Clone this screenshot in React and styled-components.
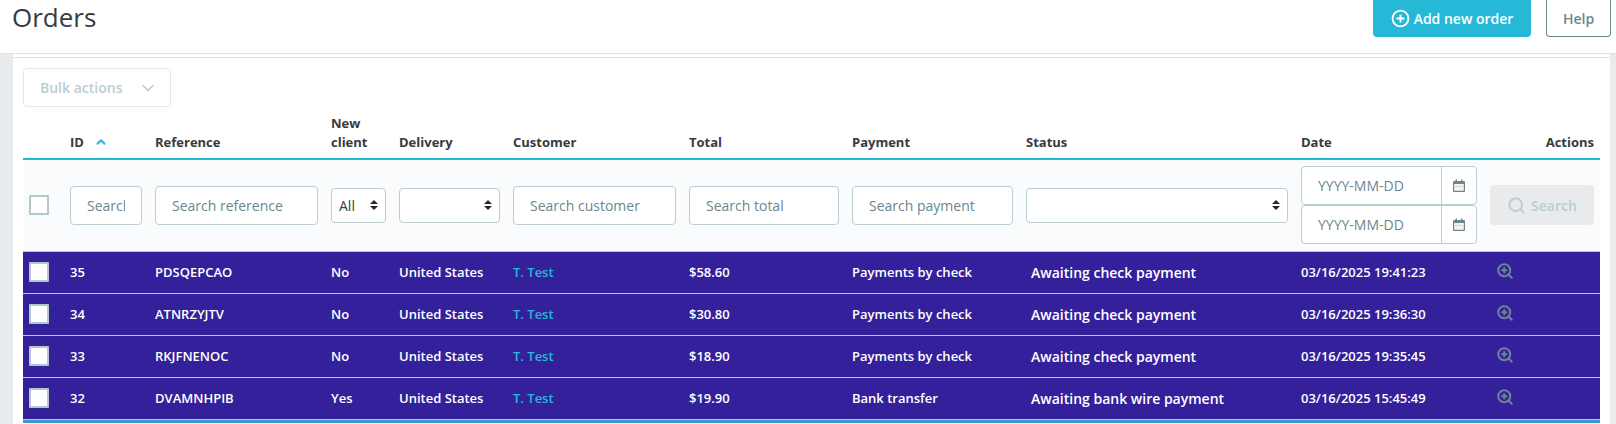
import React from 'react';
import styled, { createGlobalStyle } from 'styled-components';
import { ZoomIn, Search, CirclePlus, ChevronDown, ChevronUp } from 'lucide-react';

const GlobalStyle = createGlobalStyle`
  html, body {
    margin: 0;
    padding: 0;
    height: 424px;
    overflow: hidden;
    background: #eaebec;
    font-family: "Open Sans", "Liberation Sans", sans-serif;
    color: #363a41;
  }
`;

const PageHeader = styled.header`
  display: flex;
  justify-content: space-between;
  height: 53px;
  padding: 0 5px 0 12px;
  background: #fff;
  border-bottom: 1px solid #dfe3e6;
`;

const Title = styled.h1`
  margin: 0;
  font-size: 26px;
  font-weight: 400;
  line-height: 35px;
`;

const HeaderButtons = styled.div`
  display: flex;
  gap: 15px;
  height: 37px;
`;

const PrimaryButton = styled.button`
  display: flex;
  align-items: center;
  justify-content: center;
  gap: 4px;
  width: 158px;
  padding: 0;
  border: 0;
  border-radius: 0 0 4px 4px;
  background: #25b9d7;
  color: #fff;
  font: 600 14px "Open Sans", sans-serif;
`;

const HelpButton = styled.button`
  width: 65px;
  padding: 0;
  border: 1px solid #6c868e;
  border-top: 0;
  border-radius: 0 0 4px 4px;
  background: #fff;
  color: #6c868e;
  font: 600 14px "Open Sans", sans-serif;
`;

const Card = styled.main`
  box-sizing: border-box;
  height: 370px;
  margin: 0 6px 0 12px;
  padding-top: 3px;
  overflow: hidden;
  background: #fff;
  border-left: 1px solid #e3ecee;
`;

const CardBody = styled.div`
  padding: 10px 0 0 10px;
  border-top: 1px solid #dfe3e6;
`;

const BulkButton = styled.div`
  display: flex;
  align-items: center;
  justify-content: space-between;
  box-sizing: border-box;
  width: 148px;
  height: 39px;
  padding: 0 12px 0 16px;
  border: 1px solid #e4e8ea;
  border-radius: 4px;
  color: #b7ced3;
  font-size: 14px;
  font-weight: 600;
`;

const Table = styled.table`
  width: 1577px;
  margin-top: 2px;
  table-layout: fixed;
  border-collapse: collapse;
`;

const HeadCell = styled.th`
  height: 50px;
  padding: 0 6px 6px 7px;
  box-sizing: border-box;
  border-bottom: 2px solid #25b9d7;
  vertical-align: bottom;
  text-align: ${(p) => (p.$right ? 'right' : 'left')};
  font-size: 13px;
  font-weight: 700;
  line-height: 19px;
  color: #363a41;
`;

const SortMark = styled.span`
  display: inline-flex;
  margin-left: 10px;
  vertical-align: -2px;
  color: #25b9d7;
`;

const FilterRow = styled.tr`
  height: 92px;
  background: #fafbfc;
`;

const FilterCell = styled.td`
  padding: 0 6px 0 7px;
  vertical-align: middle;
`;

const CheckBox = styled.span`
  display: block;
  box-sizing: border-box;
  width: 20px;
  height: 20px;
  margin-left: -1px;
  border: 2px solid #b3c7cd;
  border-radius: 1px;
  background: #fff;
`;

const SearchInput = styled.input`
  display: block;
  box-sizing: border-box;
  width: 100%;
  height: 39px;
  padding: 0 16px;
  border: 1px solid #bbcdd2;
  border-radius: 4px;
  background: #fff;
  font: 400 14px "Open Sans", sans-serif;
  outline: none;
  &::placeholder {
    color: #6c868e;
    opacity: 1;
  }
`;

const SelectBox = styled.div`
  display: flex;
  align-items: center;
  justify-content: space-between;
  box-sizing: border-box;
  width: 100%;
  height: 35px;
  padding: 0 7px;
  border: 1px solid #bbcdd2;
  border-radius: 4px;
  background: #fff;
  color: #363a41;
  font-size: 14px;
`;

const SelectArrows = styled.span`
  display: flex;
  flex-direction: column;
  gap: 2px;
  margin-left: auto;
  &::before, &::after {
    content: '';
    border-left: 4px solid transparent;
    border-right: 4px solid transparent;
  }
  &::before { border-bottom: 4px solid #25282d; }
  &::after { border-top: 4px solid #25282d; }
`;

const DateStack = styled.div`
  display: flex;
  flex-direction: column;
`;

const DateField = styled.div`
  display: flex;
  box-sizing: border-box;
  height: 39px;
  border: 1px solid #bbcdd2;
  border-radius: 4px;
  background: #fff;
`;

const DateText = styled.span`
  flex: 1;
  padding-left: 16px;
  line-height: 37px;
  font-size: 14px;
  color: #6c868e;
`;

const DateIcon = styled.span`
  display: flex;
  align-items: center;
  justify-content: center;
  width: 34px;
  border-left: 1px solid #bbcdd2;
`;

const SearchButton = styled.div`
  display: flex;
  align-items: center;
  justify-content: center;
  gap: 5px;
  height: 40px;
  border-radius: 4px;
  background: #e8eaeb;
  color: #b7ced3;
  font-size: 14px;
  font-weight: 600;
`;

const OrderRow = styled.tr`
  height: 42px;
  background: #35209b;
  border-top: 1px solid #bbc6d4;
`;

const Cell = styled.td`
  padding: 0 6px 0 7px;
  color: #fff;
  font-size: 13px;
  font-weight: 600;
  white-space: nowrap;
`;

const CustomerLink = styled.span`
  color: #25b9d7;
`;

const StatusText = styled.span`
  display: inline-block;
  padding: 1px 0 0 5px;
  font-size: 14px;
`;

const ViewIcon = styled.span`
  display: flex;
  margin: -3px 0 0 6px;
  color: #6c868e;
`;

const NextRowEdge = styled.div`
  box-sizing: border-box;
  width: 1577px;
  height: 4px;
  background: #3a95d5;
  border-top: 1px solid #bbc6d4;
`;

const CalendarGlyph = () => (
  <svg width="12" height="13" viewBox="0 0 12 13" aria-hidden="true">
    <path d="M2.5 0.5h1.5v1.5h4V0.5h1.5v1.5H11a1 1 0 0 1 1 1V12a1 1 0 0 1-1 1H1a1 1 0 0 1-1-1V3a1 1 0 0 1 1-1h1.5z" fill="#6c868e" />
    <rect x="1.2" y="5" width="9.6" height="6.8" fill="#f7f3e8" />
    <path d="M2.5 7.5h7" stroke="#b9c6ca" strokeWidth="1.2" strokeDasharray="1.2 .8" />
  </svg>
);

const orders = [
  { id: 35, ref: 'PDSQEPCAO', fresh: 'No', total: '$58.60', pay: 'Payments by check', status: 'Awaiting check payment', date: '03/16/2025 19:41:23' },
  { id: 34, ref: 'ATNRZYJTV', fresh: 'No', total: '$30.80', pay: 'Payments by check', status: 'Awaiting check payment', date: '03/16/2025 19:36:30' },
  { id: 33, ref: 'RKJFNENOC', fresh: 'No', total: '$18.90', pay: 'Payments by check', status: 'Awaiting check payment', date: '03/16/2025 19:35:45' },
  { id: 32, ref: 'DVAMNHPIB', fresh: 'Yes', total: '$19.90', pay: 'Bank transfer', status: 'Awaiting bank wire payment', date: '03/16/2025 15:45:49' },
];

const widths = [40, 85, 176, 68, 114, 176, 163, 174, 275, 189, 117];

export default function App() {
  return (
    <>
      <GlobalStyle />
      <PageHeader>
        <Title>Orders</Title>
        <HeaderButtons>
          <PrimaryButton><CirclePlus size={19} strokeWidth={2.4} />Add new order</PrimaryButton>
          <HelpButton>Help</HelpButton>
        </HeaderButtons>
      </PageHeader>
      <Card>
        <CardBody>
          <BulkButton>Bulk actions <ChevronDown size={20} /></BulkButton>
          <Table>
            <colgroup>
              {widths.map((w, i) => <col key={i} width={w} />)}
            </colgroup>
            <thead>
              <tr>
                <HeadCell />
                <HeadCell>ID<SortMark><ChevronUp size={14} strokeWidth={3.5} /></SortMark></HeadCell>
                <HeadCell>Reference</HeadCell>
                <HeadCell>New client</HeadCell>
                <HeadCell>Delivery</HeadCell>
                <HeadCell>Customer</HeadCell>
                <HeadCell>Total</HeadCell>
                <HeadCell>Payment</HeadCell>
                <HeadCell>Status</HeadCell>
                <HeadCell>Date</HeadCell>
                <HeadCell $right>Actions</HeadCell>
              </tr>
              <FilterRow>
                <FilterCell><CheckBox /></FilterCell>
                <FilterCell><SearchInput placeholder="Search ID" /></FilterCell>
                <FilterCell><SearchInput placeholder="Search reference" /></FilterCell>
                <FilterCell><SelectBox>All<SelectArrows /></SelectBox></FilterCell>
                <FilterCell><SelectBox><SelectArrows /></SelectBox></FilterCell>
                <FilterCell><SearchInput placeholder="Search customer" /></FilterCell>
                <FilterCell><SearchInput placeholder="Search total" /></FilterCell>
                <FilterCell><SearchInput placeholder="Search payment" /></FilterCell>
                <FilterCell><SelectBox><SelectArrows /></SelectBox></FilterCell>
                <FilterCell>
                  <DateStack>
                    <DateField><DateText>YYYY-MM-DD</DateText><DateIcon><CalendarGlyph /></DateIcon></DateField>
                    <DateField><DateText>YYYY-MM-DD</DateText><DateIcon><CalendarGlyph /></DateIcon></DateField>
                  </DateStack>
                </FilterCell>
                <FilterCell><SearchButton><Search size={19} strokeWidth={2.4} />Search</SearchButton></FilterCell>
              </FilterRow>
            </thead>
            <tbody>
              {orders.map((o) => (
                <OrderRow key={o.id}>
                  <Cell><CheckBox /></Cell>
                  <Cell>{o.id}</Cell>
                  <Cell>{o.ref}</Cell>
                  <Cell>{o.fresh}</Cell>
                  <Cell>United States</Cell>
                  <Cell><CustomerLink>T. Test</CustomerLink></Cell>
                  <Cell>{o.total}</Cell>
                  <Cell>{o.pay}</Cell>
                  <Cell><StatusText>{o.status}</StatusText></Cell>
                  <Cell>{o.date}</Cell>
                  <Cell><ViewIcon><ZoomIn size={18} strokeWidth={2.7} /></ViewIcon></Cell>
                </OrderRow>
              ))}
            </tbody>
          </Table>
          <NextRowEdge />
        </CardBody>
      </Card>
    </>
  );
}
